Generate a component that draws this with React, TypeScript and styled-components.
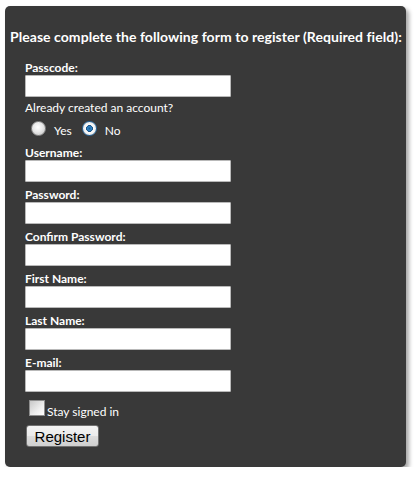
import React from "react";
import styled, { createGlobalStyle } from "styled-components";

const Global = createGlobalStyle`
  html, body { margin: 0; padding: 0; background: #ffffff; }
  body { padding: 6px 0 0 5px; font-family: "Lato", "Open Sans", sans-serif; }
`;

const Panel = styled.form`
  box-sizing: border-box;
  width: 401px;
  height: 461px;
  background: #393939;
  border-radius: 5px;
  box-shadow: 3px 3px 4px rgba(0, 0, 0, 0.35);
  padding: 22px 0 0 5px;
  color: #ffffff;
`;

const Heading = styled.h2`
  margin: 0 0 15px 0;
  font-size: 14px;
  line-height: 18px;
  font-weight: 700;
  white-space: nowrap;
  letter-spacing: 0.05px;
`;

const Body = styled.div`
  display: flex;
  flex-direction: column;
  padding-left: 15px;
`;

const Field = styled.div`
  display: flex;
  flex-direction: column;
  margin-bottom: 6px;
`;

const Label = styled.label`
  font-size: 12px;
  line-height: 14px;
  font-weight: 700;
`;

const TextInput = styled.input`
  box-sizing: border-box;
  width: 206px;
  height: 22px;
  margin: 0;
  background: #ffffff;
  border: 1px solid #b9b9b9;
  border-radius: 1px;
  outline: none;
`;

const Question = styled.div`
  font-size: 12px;
  line-height: 14px;
  font-weight: 400;
  margin-top: -2px;
`;

const RadioRow = styled.div`
  display: flex;
  align-items: center;
  padding-left: 6px;
  margin: 5px 0 10px 0;
  height: 16px;
`;

const RadioLabel = styled.label`
  display: flex;
  align-items: center;
  font-size: 12px;
  margin-right: 10px;
  span { margin-left: 8px; margin-top: 4px; }
`;

const Radio = styled.input.attrs({ type: "radio" })`
  appearance: none;
  -webkit-appearance: none;
  margin: 0;
  width: 15px;
  height: 15px;
  border-radius: 50%;
  border: 1px solid #8a8a8a;
  background: radial-gradient(circle at 45% 40%, #ffffff 0%, #e8e8e8 45%, #bcbcbc 100%);
  box-sizing: border-box;
  &:checked {
    border-color: #2b6aa0;
    background: radial-gradient(circle at 50% 50%, #1a5f9e 0%, #2f86c8 22%, #164c7e 34%, #ffffff 40%, #e6e6e6 70%, #c7c7c7 100%);
  }
`;

const CheckRow = styled.label`
  display: flex;
  align-items: center;
  margin: 1px 0 0 4px;
  font-size: 12px;
  height: 18px;
  span { margin-left: 2px; margin-top: 6px; }
`;

const Check = styled.input.attrs({ type: "checkbox" })`
  appearance: none;
  -webkit-appearance: none;
  margin: 0;
  width: 16px;
  height: 16px;
  border: 1px solid #8e8e8e;
  box-sizing: border-box;
  background: linear-gradient(135deg, #c8c8c8 0%, #eeeeee 60%, #ffffff 100%);
`;

const Button = styled.button`
  align-self: flex-start;
  margin: 8px 0 0 1px;
  width: 73px;
  height: 22px;
  padding: 0;
  font-family: "Liberation Sans", Arial, sans-serif;
  font-size: 15px;
  color: #000000;
  border: 1px solid #707070;
  border-radius: 3px;
  background: linear-gradient(#f3f3f3 0%, #ebebeb 50%, #dddddd 51%, #cfcfcf 100%);
`;

const fields = ["Username:", "Password:", "Confirm Password:", "First Name:", "Last Name:", "E-mail:"];

export default function App() {
  return (
    <>
      <Global />
      <Panel onSubmit={(e) => e.preventDefault()}>
        <Heading>Please complete the following form to register (Required field):</Heading>
        <Body>
          <Field>
            <Label>Passcode:</Label>
            <TextInput type="text" />
          </Field>
          <Question>Already created an account?</Question>
          <RadioRow>
            <RadioLabel>
              <Radio name="acct" />
              <span>Yes</span>
            </RadioLabel>
            <RadioLabel>
              <Radio name="acct" defaultChecked />
              <span>No</span>
            </RadioLabel>
          </RadioRow>
          {fields.map((f) => (
            <Field key={f}>
              <Label>{f}</Label>
              <TextInput type={f === "Password:" || f === "Confirm Password:" ? "password" : "text"} />
            </Field>
          ))}
          <CheckRow>
            <Check />
            <span>Stay signed in</span>
          </CheckRow>
          <Button type="submit">Register</Button>
        </Body>
      </Panel>
    </>
  );
}
